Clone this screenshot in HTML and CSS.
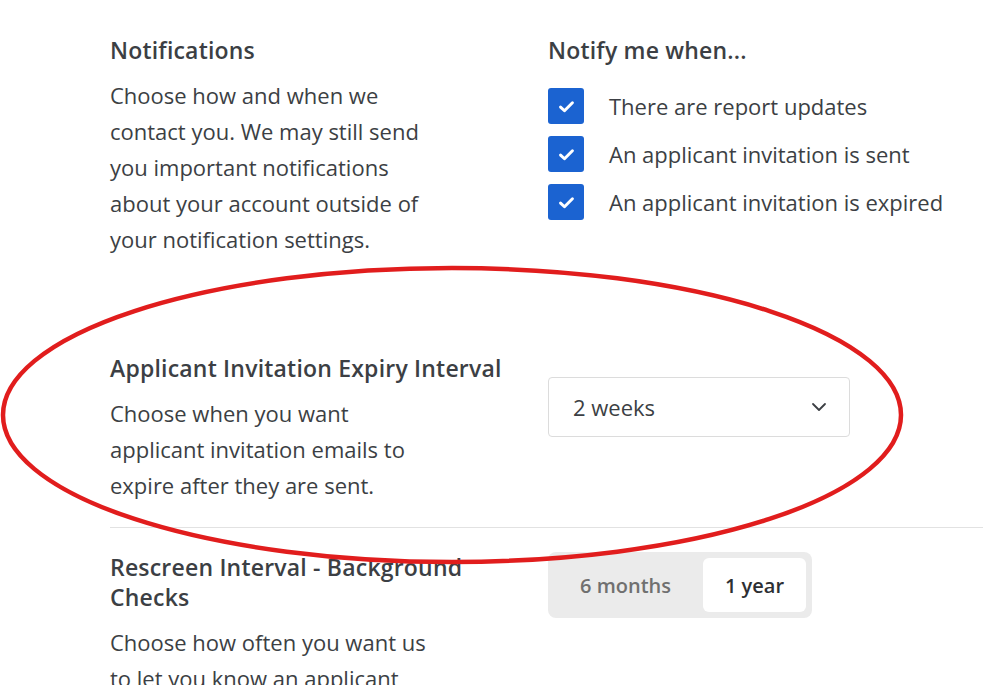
FILE: index.html
```html
<!DOCTYPE html>
<html lang="en">
<head>
  <meta charset="UTF-8">
  <meta name="viewport" content="width=device-width, initial-scale=1.0">
  <title>Settings</title>
  <link rel="stylesheet" href="styles.css">
</head>
<body>

  <div class="settings-container">
    <div class="setting-row notifications-row">
      <div class="setting-info">
        <h2>Notifications</h2>
        <p>Choose how and when we contact you. We may still send you important notifications about your account outside of your notification settings.</p>
      </div>
      <div class="setting-control">
        <h3>Notify me when...</h3>
        <label class="check-item">
          <span class="check-box"><svg viewBox="0 0 16 16" width="19" height="19"><path d="M3 8.5l3.3 3.1L13 4.9" fill="none" stroke="#fff" stroke-width="2.5" stroke-linecap="round" stroke-linejoin="round"/></svg></span>
          <span>There are report updates</span>
        </label>
        <label class="check-item">
          <span class="check-box"><svg viewBox="0 0 16 16" width="19" height="19"><path d="M3 8.5l3.3 3.1L13 4.9" fill="none" stroke="#fff" stroke-width="2.5" stroke-linecap="round" stroke-linejoin="round"/></svg></span>
          <span>An applicant invitation is sent</span>
        </label>
        <label class="check-item">
          <span class="check-box"><svg viewBox="0 0 16 16" width="19" height="19"><path d="M3 8.5l3.3 3.1L13 4.9" fill="none" stroke="#fff" stroke-width="2.5" stroke-linecap="round" stroke-linejoin="round"/></svg></span>
          <span>An applicant invitation is expired</span>
        </label>
      </div>
    </div>

    <div class="setting-row expiry-row">
      <div class="setting-info">
        <h2>Applicant Invitation Expiry Interval</h2>
        <p>Choose when you want applicant invitation emails to expire after they are sent.</p>
      </div>
      <div class="setting-control">
        <div class="select-box">
          <span>2 weeks</span>
          <svg viewBox="0 0 20 20" width="20" height="20"><path d="M4 7l6 6 6-6" fill="none" stroke="#3c3f44" stroke-width="1.8" stroke-linecap="round" stroke-linejoin="round"/></svg>
        </div>
      </div>
    </div>

    <div class="setting-row rescreen-row">
      <div class="setting-info">
        <h2>Rescreen Interval - Background Checks</h2>
        <p>Choose how often you want us to let you know an applicant needs to be rescreened.</p>
      </div>
      <div class="setting-control">
        <div class="segmented">
          <span class="segment">6 months</span>
          <span class="segment active">1 year</span>
        </div>
      </div>
    </div>
  </div>

  <svg class="annotation" width="983" height="685" viewBox="0 0 983 685">
    <ellipse cx="452" cy="415" rx="449" ry="147" fill="none" stroke="#e11d1d" stroke-width="4.5"/>
  </svg>

</body>
</html>
```

FILE: styles.css
```css
body {
  font-family: "Open Sans", Arial, sans-serif;
  margin: 0;
  padding: 0;
  background-color: #ffffff;
  color: #3c3f44;
  overflow: hidden;
}
.settings-container {
  padding-left: 110px;
  padding-top: 35px;
}
.setting-row {
  display: grid;
  grid-template-columns: 438px 1fr;
}
.setting-info h2 {
  margin: 0;
  font-size: 23px;
  font-weight: 600;
  line-height: 30px;
  letter-spacing: 0.2px;
}
.setting-info p {
  margin: 12px 0 0;
  width: 332px;
  font-size: 22px;
  line-height: 36px;
}
.setting-control h3 {
  margin: 0;
  font-size: 23px;
  font-weight: 600;
  line-height: 30px;
  letter-spacing: 0.2px;
}
.check-item {
  display: flex;
  align-items: center;
  gap: 25px;
  margin-top: 12px;
  font-size: 22px;
}
.notifications-row .setting-control h3 + .check-item {
  margin-top: 23px;
}
.check-box {
  width: 36px;
  height: 36px;
  border-radius: 3px;
  background-color: #1b63d1;
  display: flex;
  align-items: center;
  justify-content: center;
  flex-shrink: 0;
}
.expiry-row {
  margin-top: 96px;
  padding-bottom: 24px;
  border-bottom: 1px solid #e2e2e2;
}
.expiry-row .setting-control {
  padding-top: 24px;
}
.select-box {
  width: 302px;
  height: 60px;
  border: 1px solid #dcdcdc;
  border-radius: 4px;
  display: flex;
  align-items: center;
  justify-content: space-between;
  padding: 0 20px 0 24px;
  box-sizing: border-box;
  font-size: 22px;
}
.rescreen-row {
  padding-top: 24px;
}
.rescreen-row .setting-info h2 {
  width: 370px;
}
.segmented {
  display: inline-flex;
  gap: 6px;
  background-color: #ebebeb;
  border-radius: 8px;
  padding: 6px;
}
.segment {
  display: flex;
  align-items: center;
  justify-content: center;
  height: 54px;
  padding: 0 26px;
  font-size: 20px;
  font-weight: 600;
  color: #707070;
  border-radius: 6px;
}
.segment.active {
  width: 103px;
  padding: 0;
  background-color: #ffffff;
  color: #2d2f33;
}
.annotation {
  position: absolute;
  left: 0;
  top: 0;
  pointer-events: none;
}
```
